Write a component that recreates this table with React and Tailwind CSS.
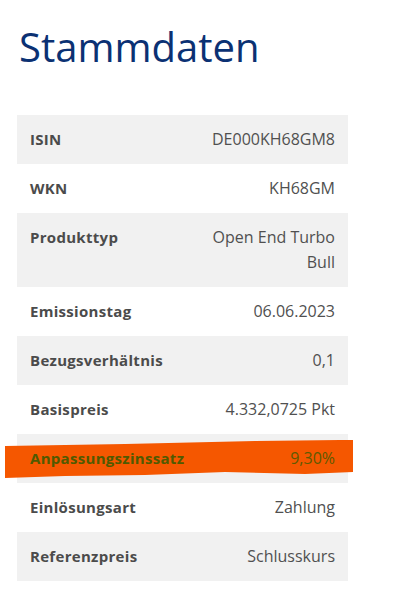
export default function App() {
  const rows = [
    ["ISIN", ["DE000KH68GM8"]],
    ["WKN", ["KH68GM"]],
    ["Produkttyp", ["Open End Turbo", "Bull"]],
    ["Emissionstag", ["06.06.2023"]],
    ["Bezugsverhältnis", ["0,1"]],
    ["Basispreis", ["4.332,0725 Pkt"]],
    ["Anpassungszinssatz", ["9,30%"], true],
    ["Einlösungsart", ["Zahlung"]],
    ["Referenzpreis", ["Schlusskurs"]],
  ];
  return (
    <div className="w-[404px] h-[614px] bg-white overflow-hidden" style={{ fontFamily: '"Open Sans", sans-serif' }}>
      <h1 className="pl-[19px] pt-[22px] text-[40px] leading-[50px] text-[#0b3173]">Stammdaten</h1>
      <div className="mt-[43px] ml-[17px] w-[331px]">
        {rows.map(([label, vals, hl], i) => (
          <div key={label} className={`relative flex justify-between pl-[13px] pr-[13px] py-[12px] text-[15px] leading-[25px] ${i % 2 === 0 ? "bg-[#f1f1f1]" : "bg-white"}`}>
            {hl && (
              <svg className="absolute left-[-12px] top-[6px]" width="348" height="38" viewBox="0 0 348 38" preserveAspectRatio="none">
                <path d="M0 6 L120 4 L250 1 L335 0 L348 0 L348 32 L300 34 L220 32 L140 35 L60 36 L0 38 Z" fill="#f55700" />
              </svg>
            )}
            <span className={`relative font-bold tracking-[0.3px] ${hl ? "text-[#4f5a00]" : "text-[#4b4b4b]"}`}>{label}</span>
            <span className={`relative text-right text-[16px] ${hl ? "text-[#5f5a00]" : "text-[#505050]"}`}>
              {vals.map((v) => (
                <div key={v}>{v}</div>
              ))}
            </span>
          </div>
        ))}
      </div>
    </div>
  );
}
